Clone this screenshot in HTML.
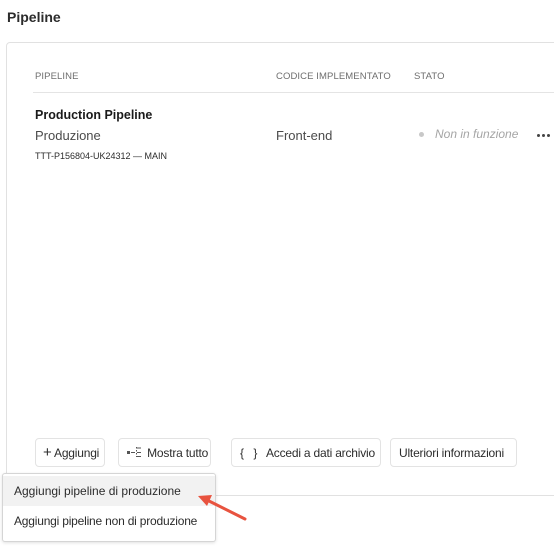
<!DOCTYPE html>
<html><head><style>
body{margin:0;width:554px;height:553px;background:#fff;font-family:"Liberation Sans",sans-serif;position:relative;overflow:hidden;color:#2c2c2c}
.a{position:absolute;white-space:nowrap}
.card{position:absolute;left:6px;top:42px;width:600px;height:452px;border:1px solid #e1e1e1;border-radius:4px;background:#fff}
.h{font-size:9.5px;color:#6e6e6e;letter-spacing:.1px}
.btn{position:absolute;top:438px;height:29px;border:1px solid #e3e3e3;border-radius:4px;font-size:12px;line-height:28px;color:#2c2c2c;box-sizing:border-box;padding-left:9px;background:#fff;white-space:nowrap;overflow:hidden;letter-spacing:-.2px}
.d{display:inline-block;width:3px;height:3px;border-radius:50%;background:#444;margin-right:2px}
</style></head><body>
<div class="a" style="left:7px;top:9px;font-size:14px;font-weight:bold;color:#2c2c2c">Pipeline</div>
<div class="card"></div>
<div class="a h" style="left:35px;top:71px">PIPELINE</div>
<div class="a h" style="left:276px;top:71px">CODICE IMPLEMENTATO</div>
<div class="a h" style="left:414px;top:71px">STATO</div>
<div class="a" style="left:33px;top:92px;width:530px;height:1px;background:#e4e4e4"></div>
<div class="a" style="left:35px;top:108px;font-size:12.5px;font-weight:bold;color:#1a1a1a">Production Pipeline</div>
<div class="a" style="left:35px;top:128px;font-size:13px;color:#4b4b4b">Produzione</div>
<div class="a" style="left:276px;top:128px;font-size:13px;color:#4b4b4b">Front-end</div>
<div class="a" style="left:35px;top:151px;font-size:9px;color:#2c2c2c">TTT-P156804-UK24312 — MAIN</div>
<div class="a" style="left:419px;top:132px;width:5px;height:5px;border-radius:50%;background:#c8c8c8"></div>
<div class="a" style="left:435px;top:127px;font-size:12px;font-style:italic;color:#a5a5a5">Non in funzione</div>
<div class="a" style="left:537px;top:133px;line-height:0"><span class="d"></span><span class="d"></span><span class="d"></span></div>
<div class="btn" style="left:35px;width:70px;padding-left:7px"><span style="font-size:15px">+</span> Aggiungi</div>
<div class="btn" style="left:118px;width:93px;padding-left:7px"><svg width="18" height="12" style="vertical-align:-1px"><rect x="1" y="5" width="3" height="3" fill="#555"/><line x1="5" y1="6.5" x2="9" y2="6.5" stroke="#555"/><line x1="10.5" y1="1" x2="10.5" y2="11" stroke="#555" stroke-dasharray="1.5,1.5"/><line x1="11" y1="2" x2="15" y2="2" stroke="#555"/><line x1="11" y1="6.5" x2="15" y2="6.5" stroke="#555"/><line x1="11" y1="10.5" x2="15" y2="10.5" stroke="#555"/></svg> Mostra tutto</div>
<div class="btn" style="left:231px;width:150px;padding-left:8px"><span style="letter-spacing:3px">{ }</span>&nbsp; Accedi a dati archivio</div>
<div class="btn" style="left:390px;width:127px;padding-left:8px">Ulteriori informazioni</div>
<div class="a" style="left:2px;top:473px;width:212px;height:67px;border:1px solid #d5d5d5;border-radius:3px;background:#fff;box-shadow:0 1px 3px rgba(0,0,0,.12)">
<div style="margin-top:2px;height:30px;background:#f2f2f2;font-size:12px;line-height:30px;padding-left:11px">Aggiungi pipeline di produzione</div>
<div style="height:30px;font-size:12px;line-height:30px;padding-left:11px;letter-spacing:-.2px">Aggiungi pipeline non di produzione</div>
</div>
<svg class="a" style="left:190px;top:490px" width="70" height="40"><line x1="55" y1="29" x2="15" y2="9" stroke="#e8533f" stroke-width="3" stroke-linecap="round"/><polygon points="8,6 22,5 17,16" fill="#e8533f"/></svg>
</body></html>
